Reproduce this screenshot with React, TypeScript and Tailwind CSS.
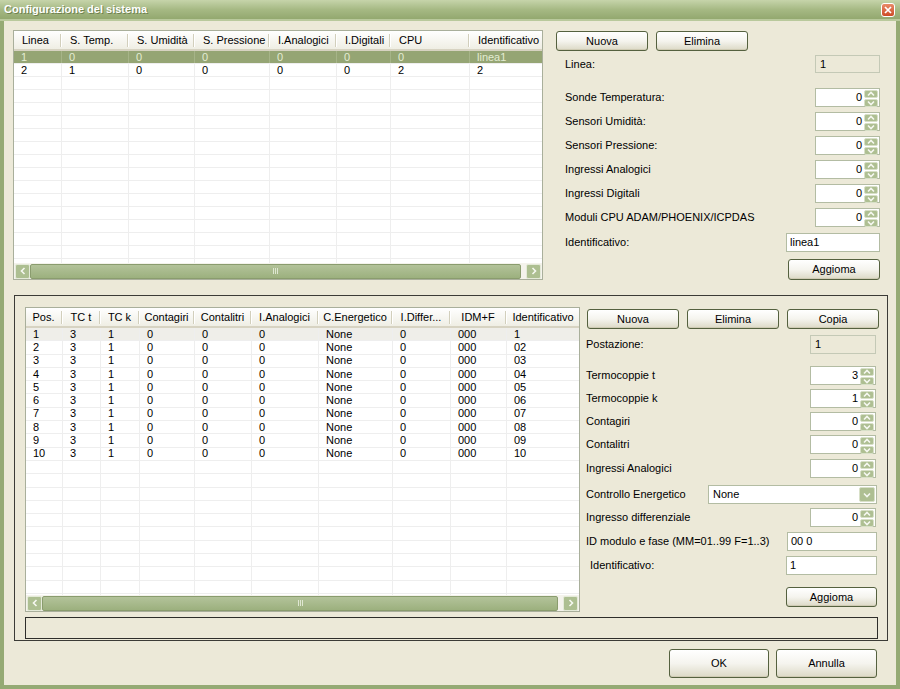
import React from 'react';

type Col = { h: string; w: string };

const topCols: Col[] = [
  { h: 'Linea', w: 'w-[48px]' },
  { h: 'S. Temp.', w: 'w-[67px]' },
  { h: 'S. Umidità', w: 'w-[66px]' },
  { h: 'S. Pressione', w: 'w-[75px]' },
  { h: 'I.Analogici', w: 'w-[67px]' },
  { h: 'I.Digitali', w: 'w-[54px]' },
  { h: 'CPU', w: 'w-[79px]' },
  { h: 'Identificativo', w: 'w-[72px]' },
];

const botCols: Col[] = [
  { h: 'Pos.', w: 'w-[37px]' },
  { h: 'TC t', w: 'w-[38px]' },
  { h: 'TC k', w: 'w-[39px]' },
  { h: 'Contagiri', w: 'w-[55px]' },
  { h: 'Contalitri', w: 'w-[57px]' },
  { h: 'I.Analogici', w: 'w-[67px]' },
  { h: 'C.Energetico', w: 'w-[74px]' },
  { h: 'I.Differ...', w: 'w-[58px]' },
  { h: 'IDM+F', w: 'w-[56px]' },
  { h: 'Identificativo', w: 'w-[72px]' },
];

const topRows: string[][] = [
  ['1', '0', '0', '0', '0', '0', '0', 'linea1'],
  ['2', '1', '0', '0', '0', '0', '2', '2'],
];

const botRows: string[][] = Array.from({ length: 10 }, (_, i) => {
  const n = i + 1;
  const id = n === 1 ? '1' : n < 10 ? `0${n}` : `${n}`;
  return [`${n}`, '3', '1', '0', '0', '0', 'None', '0', '000', id];
});

function XPButton({ label, className = '' }: { label: string; className?: string }) {
  return (
    <div
      className={`flex items-center justify-center rounded-[3px] border border-[#55613f] bg-linear-to-b from-[#ffffff] via-[#f5f4ee] to-[#dcd9c6] text-[11px] text-black shadow-[inset_0_-1px_0_#cfcbb4] ${className}`}
    >
      {label}
    </div>
  );
}

function Chevron({ dir, color = '#f6f8f1' }: { dir: 'up' | 'down' | 'left' | 'right'; color?: string }) {
  const d =
    dir === 'up'
      ? 'M1 4.5 L4 1.5 L7 4.5'
      : dir === 'down'
      ? 'M1 1.5 L4 4.5 L7 1.5'
      : dir === 'left'
      ? 'M4.5 1 L1.5 4 L4.5 7'
      : 'M1.5 1 L4.5 4 L1.5 7';
  const vb = dir === 'up' || dir === 'down' ? '0 0 8 6' : '0 0 6 8';
  const w = dir === 'up' || dir === 'down' ? 8 : 6;
  const h = dir === 'up' || dir === 'down' ? 6 : 8;
  return (
    <svg width={w} height={h} viewBox={vb}>
      <path d={d} stroke={color} strokeWidth="1.6" fill="none" />
    </svg>
  );
}

function Spin({ value, className = '' }: { value: string; className?: string }) {
  return (
    <div className={`flex h-[19px] items-stretch border border-[#b3bca3] bg-white ${className}`}>
      <div className="flex flex-1 items-center justify-end pr-[2px] text-[11px]">{value}</div>
      <div className="flex w-[15px] flex-col gap-px py-px pr-px">
        <div className="flex flex-1 items-center justify-center rounded-[2px] border border-[#d8e0c8] bg-[#aebf92]">
          <Chevron dir="up" />
        </div>
        <div className="flex flex-1 items-center justify-center rounded-[2px] border border-[#d8e0c8] bg-[#aebf92]">
          <Chevron dir="down" />
        </div>
      </div>
    </div>
  );
}

function ReadOnly({ value, className = '' }: { value: string; className?: string }) {
  return (
    <div className={`flex items-center border border-[#c4c9b6] bg-[#ece9d8] pl-[4px] text-[11px] ${className}`}>{value}</div>
  );
}

function TextBox({ value, className = '' }: { value: string; className?: string }) {
  return (
    <div className={`flex h-[19px] items-center border border-[#b3bca3] bg-white pl-[3px] text-[11px] ${className}`}>{value}</div>
  );
}

function Combo({ value, className = '' }: { value: string; className?: string }) {
  return (
    <div className={`flex h-[19px] items-stretch border border-[#b3bca3] bg-white ${className}`}>
      <div className="flex flex-1 items-center pl-[4px] text-[11px]">{value}</div>
      <div className="m-px flex w-[16px] items-center justify-center rounded-[2px] border border-[#d8e0c8] bg-[#aebf92]">
        <Chevron dir="down" />
      </div>
    </div>
  );
}

function ArrowBtn({ dir }: { dir: 'left' | 'right' }) {
  return (
    <div className="flex h-[15px] w-[15px] items-center justify-center rounded-[2px] border border-[#e4ead8] bg-[#adbf91]">
      <Chevron dir={dir} />
    </div>
  );
}

function HScroll() {
  return (
    <div className="flex h-[16px] items-center bg-[#f4f3ec] px-px">
      <ArrowBtn dir="left" />
      <div className="flex h-[15px] flex-1 pr-[5px]">
        <div className="flex flex-1 items-center justify-center rounded-[2px] border border-[#8a9c6e] bg-linear-to-b from-[#b3c39a] to-[#9cb07e]">
          <div className="flex gap-px">
            <div className="h-[6px] w-px bg-[#dfe7d2]" />
            <div className="h-[6px] w-px bg-[#dfe7d2]" />
            <div className="h-[6px] w-px bg-[#dfe7d2]" />
          </div>
        </div>
      </div>
      <ArrowBtn dir="right" />
    </div>
  );
}

function Grid({
  cols,
  rows,
  emptyRows,
  rowH,
  centerHeader,
  selectFirst,
  className = '',
}: {
  cols: Col[];
  rows: string[][];
  emptyRows: number;
  rowH: string;
  centerHeader: boolean;
  selectFirst: 'olive' | 'gray';
  className?: string;
}) {
  const allRows: (string[] | null)[] = [...rows, ...Array.from({ length: emptyRows }, () => null)];
  return (
    <div className={`flex flex-col border border-[#a9af9b] bg-white ${className}`}>
      <div className="flex h-[20px] shrink-0 border-b-2 border-[#d7d3c2] bg-linear-to-b from-[#ffffff] to-[#efeee4]">
        {cols.map((c, i) => (
          <div key={i} className={`flex h-full shrink-0 items-center ${c.w}`}>
            <span
              className={`flex-1 truncate whitespace-nowrap text-[11px] text-black ${centerHeader ? 'text-center' : 'pl-[8px]'}`}
            >
              {c.h}
            </span>
            {i < cols.length - 1 && (
              <span className="h-[13px] w-[2px] shrink-0 border-l border-r border-l-[#d2cfbc] border-r-white" />
            )}
          </div>
        ))}
      </div>
      <div className="flex-1 overflow-hidden">
        {allRows.map((r, ri) => {
          const sel = ri === 0;
          const rowCls =
            sel && selectFirst === 'olive'
              ? 'bg-[#95a574] text-[#e3ecd2]'
              : sel && selectFirst === 'gray'
              ? 'bg-[#efeee9] text-black'
              : 'bg-white text-black';
          return (
            <div key={ri} className={`flex ${rowH} border-b border-[#eeeeee] ${rowCls}`}>
              {cols.map((c, ci) => (
                <div
                  key={ci}
                  className={`flex shrink-0 items-center overflow-hidden whitespace-nowrap pl-[7px] text-[11px] leading-none ${c.w} ${
                    ci < cols.length - 1
                      ? sel && selectFirst === 'olive'
                        ? 'border-r border-[#a6b488]'
                        : 'border-r border-[#eeeeee]'
                      : ''
                  }`}
                >
                  {r ? r[ci] : ''}
                </div>
              ))}
            </div>
          );
        })}
      </div>
      <HScroll />
    </div>
  );
}

function Row({
  label,
  children,
  className = '',
  labelCls = '',
}: {
  label: string;
  children: React.ReactNode;
  className?: string;
  labelCls?: string;
}) {
  return (
    <div className={`flex items-center justify-between ${className}`}>
      <span className={`whitespace-nowrap text-[11px] text-black ${labelCls}`}>{label}</span>
      {children}
    </div>
  );
}

export default function App() {
  return (
    <div className="flex h-[689px] w-[900px] flex-col bg-[#95aa74] font-['Liberation_Sans',Arial,sans-serif] text-black">
      {/* Title bar */}
      <div className="flex h-[19px] shrink-0 items-center justify-between bg-linear-to-b from-[#c6d4aa] via-[#a6b984] to-[#93a86f] pl-[4px] pr-[5px]">
        <span className="text-[11px] font-bold text-white [text-shadow:1px_1px_0_#6f8250]">Configurazione del sistema</span>
        <div className="flex h-[14px] w-[14px] items-center justify-center rounded-[3px] border border-white bg-linear-to-b from-[#e88a68] to-[#cd4a25]">
          <svg width="8" height="8" viewBox="0 0 8 8">
            <path d="M1 1 L7 7 M7 1 L1 7" stroke="#ffffff" strokeWidth="1.7" />
          </svg>
        </div>
      </div>
      <div className="h-[2px] shrink-0 bg-[#b9c99c]" />

      {/* Client area */}
      <div className="mx-[4px] mb-[4px] flex flex-1 flex-col bg-[#ece9d8] pl-[9px] pt-[9px]">
        {/* Top section */}
        <div className="flex">
          <Grid
            cols={topCols}
            rows={topRows}
            emptyRows={15}
            rowH="h-[13px]"
            centerHeader={false}
            selectFirst="olive"
            className="h-[250px] w-[530px]"
          />
          <div className="ml-[13px] mt-px flex w-[324px] flex-col">
            <div className="flex gap-[8px]">
              <XPButton label="Nuova" className="h-[20px] w-[92px]" />
              <XPButton label="Elimina" className="h-[20px] w-[92px]" />
            </div>
            <Row label="Linea:" className="mt-[4px] h-[18px] pl-[9px]">
              <ReadOnly value="1" className="h-[18px] w-[65px]" />
            </Row>
            <Row label="Sonde Temperatura:" className="mt-[15px] pl-[9px]">
              <Spin value="0" className="w-[65px]" />
            </Row>
            <Row label="Sensori Umidità:" className="mt-[5px] pl-[9px]">
              <Spin value="0" className="w-[65px]" />
            </Row>
            <Row label="Sensori Pressione:" className="mt-[5px] pl-[9px]">
              <Spin value="0" className="w-[65px]" />
            </Row>
            <Row label="Ingressi Analogici" className="mt-[5px] pl-[9px]">
              <Spin value="0" className="w-[65px]" />
            </Row>
            <Row label="Ingressi Digitali" className="mt-[5px] pl-[9px]">
              <Spin value="0" className="w-[65px]" />
            </Row>
            <Row label="Moduli CPU ADAM/PHOENIX/ICPDAS" className="mt-[5px] pl-[9px]">
              <Spin value="0" className="w-[65px]" />
            </Row>
            <Row label="Identificativo:" className="mt-[6px] pl-[9px]">
              <TextBox value="linea1" className="w-[94px]" />
            </Row>
            <div className="mt-[7px] flex justify-end">
              <XPButton label="Aggioma" className="h-[21px] w-[92px]" />
            </div>
          </div>
        </div>

        {/* Bottom group */}
        <div className="ml-px mt-[15px] flex h-[346px] w-[874px] flex-col border border-[#3b3b36] pb-px pl-[10px] pr-[8px] pt-[11px]">
          <div className="flex">
            <Grid
              cols={botCols}
              rows={botRows}
              emptyRows={11}
              rowH="h-[13.3px]"
              centerHeader={true}
              selectFirst="gray"
              className="h-[305px] w-[555px]"
            />
            <div className="ml-[6px] mt-[2px] flex w-[293px] flex-col">
              <div className="flex gap-[8px] pl-px">
                <XPButton label="Nuova" className="h-[20px] w-[92px]" />
                <XPButton label="Elimina" className="h-[20px] w-[92px]" />
                <XPButton label="Copia" className="h-[20px] w-[92px]" />
              </div>
              <div className="mt-[6px] flex items-start justify-between pr-[3px]">
                <span className="pt-px text-[11px]">Postazione:</span>
                <ReadOnly value="1" className="h-[19px] w-[66px]" />
              </div>
              <Row label="Termocoppie t" className="mt-[12px] pr-[3px]">
                <Spin value="3" className="w-[66px]" />
              </Row>
              <Row label="Termocoppie k" className="mt-[4px] pr-[3px]">
                <Spin value="1" className="w-[66px]" />
              </Row>
              <Row label="Contagiri" className="mt-[4px] pr-[3px]">
                <Spin value="0" className="w-[66px]" />
              </Row>
              <Row label="Contalitri" className="mt-[4px] pr-[3px]">
                <Spin value="0" className="w-[66px]" />
              </Row>
              <Row label="Ingressi Analogici" className="mt-[5px] pr-[3px]">
                <Spin value="0" className="w-[66px]" />
              </Row>
              <Row label="Controllo Energetico" className="mt-[7px] pr-[2px]">
                <Combo value="None" className="w-[169px]" />
              </Row>
              <Row label="Ingresso differenziale" className="mt-[4px] pr-[3px]">
                <Spin value="0" className="w-[66px]" />
              </Row>
              <Row label="ID modulo e fase (MM=01..99 F=1..3)" className="mt-[5px] pr-[2px]">
                <TextBox value="00 0" className="w-[90px]" />
              </Row>
              <Row label="Identificativo:" labelCls="pl-[4px]" className="mt-[5px] pr-[2px]">
                <TextBox value="1" className="w-[91px]" />
              </Row>
              <div className="mt-[12px] flex justify-end pr-[2px]">
                <XPButton label="Aggioma" className="h-[20px] w-[91px]" />
              </div>
            </div>
          </div>
          <div className="mt-[5px] h-[22px] w-[853px] border border-[#2e2e2a]" />
        </div>

        {/* Dialog buttons */}
        <div className="mr-[19px] mt-[8px] flex justify-end gap-[7px]">
          <XPButton label="OK" className="h-[29px] w-[100px]" />
          <XPButton label="Annulla" className="h-[29px] w-[101px]" />
        </div>
      </div>
    </div>
  );
}
